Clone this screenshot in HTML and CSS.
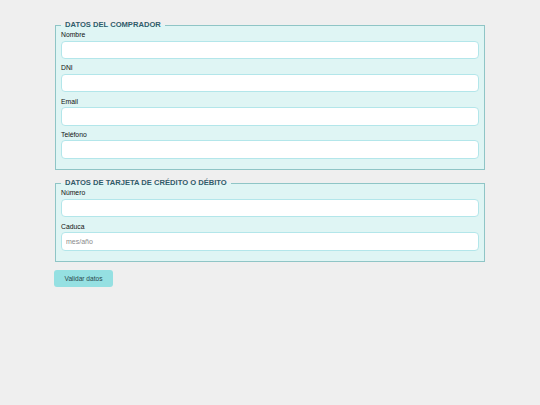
FILE: index.html
```html
<!DOCTYPE html>
<html lang="es">
<head>
<meta charset="utf-8">
<title>Datos</title>
<link rel="stylesheet" href="styles.css">
</head>
<body>
<form class="form">
  <fieldset class="group">
    <legend class="group-title">DATOS DEL COMPRADOR</legend>
    <div class="field"><label class="label">Nombre</label><input class="input" type="text"></div>
    <div class="field"><label class="label">DNI</label><input class="input" type="text"></div>
    <div class="field"><label class="label">Email</label><input class="input" type="text"></div>
    <div class="field"><label class="label">Teléfono</label><input class="input" type="text"></div>
  </fieldset>
  <fieldset class="group">
    <legend class="group-title">DATOS DE TARJETA DE CRÉDITO O DÉBITO</legend>
    <div class="field"><label class="label">Número</label><input class="input" type="text"></div>
    <div class="field"><label class="label">Caduca</label><input class="input" type="text" placeholder="mes/año"></div>
  </fieldset>
  <button class="btn" type="button">Validar datos</button>
</form>
</body>
</html>
```

FILE: styles.css
```css
html, body {
  margin: 0;
  padding: 0;
  background: #efefef;
  font-family: "Liberation Sans", Arial, sans-serif;
}
.form {
  width: 432px;
  margin: 20px auto 0;
}
.group {
  margin: 0 1px 8px;
  padding: 0 5px 10.5px;
  border: 1px solid #8fc5c6;
  background: #dff5f4;
}
.group-title {
  padding: 0 4px;
  margin: 0;
  font-size: 7.6px;
  line-height: 10px;
  font-weight: bold;
  color: #2f5d6b;
}
.field {
  display: flex;
  flex-direction: column;
}
.field + .field {
  margin-top: 4.3px;
}
.label {
  font-size: 6.8px;
  line-height: 10.5px;
  color: #111;
}
.input {
  box-sizing: border-box;
  height: 18.5px;
  margin: 0;
  padding: 0 4px;
  border: 1px solid #b3e6ea;
  border-radius: 4px;
  background: #fff;
  font-family: "Liberation Sans", Arial, sans-serif;
  font-size: 7px;
  outline: none;
}
.input::placeholder {
  color: #8a8a8a;
}
.btn {
  display: block;
  margin-top: 5px;
  width: 59px;
  height: 17px;
  padding: 0;
  border: none;
  border-radius: 3px;
  background: #95e0e2;
  color: #2a4a4f;
  font-family: "Liberation Sans", Arial, sans-serif;
  font-size: 6.6px;
}
```
